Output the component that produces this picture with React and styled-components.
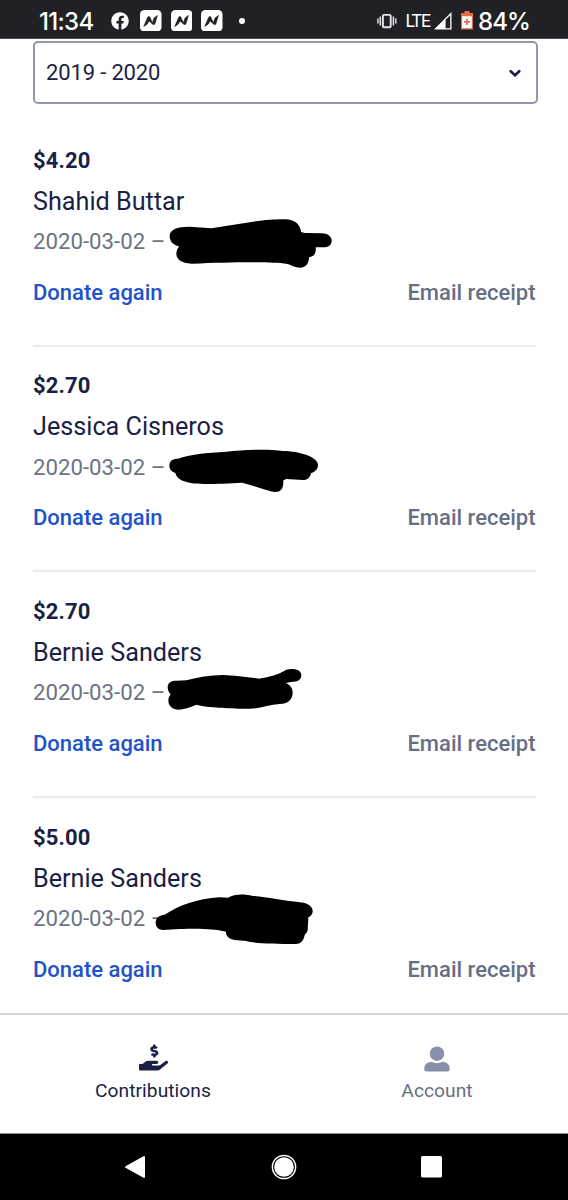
import React from "react";
import styled, { createGlobalStyle } from "styled-components";
import { FaFacebook, FaHandHoldingUsd } from "react-icons/fa";

const GlobalStyle = createGlobalStyle`
  * {
    box-sizing: border-box;
  }
  body {
    margin: 0;
    background: #fff;
    font-family: Roboto, "Liberation Sans", sans-serif;
  }
`;

const Screen = styled.div`
  display: flex;
  flex-direction: column;
  width: 568px;
  height: 1200px;
  overflow: hidden;
  background: #fff;
  color: #1b1f45;
`;

const StatusBar = styled.header`
  display: flex;
  flex: none;
  align-items: center;
  justify-content: space-between;
  height: 39px;
  padding: 3px 38px 0 39px;
  background: #202124;
  border-bottom: 1px solid #4a4b4e;
  color: #fff;
  svg {
    display: block;
    flex: none;
  }
`;

const StatusGroup = styled.div`
  display: flex;
  align-items: center;
`;

const Clock = styled.span`
  width: 72px;
  padding-top: 3px;
  font-family: Inter, sans-serif;
  font-size: 24px;
  font-weight: 500;
  line-height: 32px;
  letter-spacing: -0.7px;
`;

const NewsIcons = styled.div`
  display: flex;
  gap: 9px;
  margin: 0 16px 0 11px;
`;

const Dot = styled.span`
  width: 6px;
  height: 6px;
  border-radius: 50%;
  background: #fff;
`;

const Network = styled.span`
  margin: 0 4px 0 9px;
  font-size: 17.5px;
  font-weight: 400;
  line-height: 34px;
  letter-spacing: -1px;
`;

const BatterySlot = styled.span`
  margin: 0 5px 0 9px;
`;

const Percent = styled.span`
  padding-top: 3px;
  font-family: Inter, sans-serif;
  font-size: 24px;
  font-weight: 500;
  line-height: 32px;
  letter-spacing: -0.9px;
`;

const Content = styled.main`
  display: flex;
  flex: 1;
  flex-direction: column;
  min-height: 0;
  padding: 2px 30px 0 33px;
`;

const Select = styled.div`
  display: flex;
  flex: none;
  align-items: center;
  justify-content: space-between;
  height: 63px;
  padding: 0 15px 0 11px;
  border: 2px solid #9297ab;
  border-radius: 5px;
  font-size: 22px;
  letter-spacing: -0.15px;
`;

const List = styled.div`
  display: flex;
  flex-direction: column;
  padding: 17px 2px 0 0;
`;

const Item = styled.article`
  display: flex;
  flex: none;
  flex-direction: column;
  height: 225.6px;
  padding-top: 25.9px;
  border-bottom: 2px solid ${(props) => (props.$last ? "transparent" : "#eaebed")};
`;

const Amount = styled.div`
  height: 28px;
  font-size: 22px;
  font-weight: 700;
  line-height: 28px;
  letter-spacing: 0.1px;
`;

const Name = styled.div`
  height: 32px;
  margin-top: 11px;
  font-size: 25.2px;
  line-height: 32px;
`;

const Meta = styled.div`
  position: relative;
  height: 28px;
  margin-top: 9.1px;
  color: #6b7385;
  font-size: 22.2px;
  line-height: 28px;
  letter-spacing: 0.02px;
`;

/* marker stroke lying over the rest of the meta line */
const Scribble = styled.svg`
  position: absolute;
  top: -13.7px;
  left: 120px;
  width: 186.7px;
  height: 60px;
`;

const Actions = styled.div`
  display: flex;
  justify-content: space-between;
  margin-top: 23.8px;
  padding-right: 0.5px;
  font-size: 22px;
  font-weight: 500;
  line-height: 28px;
`;

const Action = styled.a`
  color: ${(props) => (props.$primary ? "#2253c9" : "#667085")};
`;

const TabBar = styled.nav`
  display: flex;
  flex: none;
  height: 121px;
  border-top: 2px solid #d2d5da;
  border-bottom: 1px solid #8e8e8e;
`;

const Tab = styled.div`
  display: flex;
  flex: 1;
  flex-direction: column;
  align-items: center;
  padding: ${(props) => (props.$active ? "28px 0 0 22px" : "29.5px 0 0 22px")};
  color: ${(props) => (props.$active ? "#1b1f45" : "#667085")};
  svg {
    display: block;
  }
`;

const TabLabel = styled.span`
  margin-top: ${(props) => (props.$active ? "6px" : "5.5px")};
  font-size: 19.2px;
  line-height: 26px;
  letter-spacing: 0.05px;
`;

const SystemNav = styled.footer`
  display: flex;
  flex: none;
  align-items: center;
  justify-content: space-between;
  height: 66px;
  padding: 0 125px 0 124px;
  background: #000;
`;

const items = [
  {
    amount: "$4.20",
    name: "Shahid Buttar",
    date: "2020-03-02 –",
    top: 220,
    stroke:
      "M450 290C450 270 470 261 510 261L575 266L700 246C740 240 780 238 800 239C830 242 843 258 844 277L855 280L905 281C925 281 936 291 936 303C936 316 926 323 910 323L888 323C890 340 885 350 868 353C868 372 858 384 842 384C825 384 815 375 800 372C760 366 650 366 515 372C485 371 470 358 470 342C470 335 473 328 478 320C460 316 450 305 450 290Z",
  },
  {
    amount: "$2.70",
    name: "Jessica Cisneros",
    date: "2020-03-02 –",
    top: 207,
    stroke:
      "M449 288C449 272 458 266 475 266C510 253 560 248 620 245C670 240 740 236 790 243C840 243 895 262 895 284C895 298 885 306 874 309C872 322 864 330 850 330L800 327L791 331C792 355 785 366 766 366C750 364 710 350 668 338C630 340 590 342 560 342C510 342 472 334 467 309C455 305 449 298 449 288Z",
  },
  {
    amount: "$2.70",
    name: "Bernie Sanders",
    date: "2020-03-02 –",
    top: 223,
    stroke:
      "M444 293C444 278 456 273 470 273L500 272C535 262 570 257 610 256C640 257 690 263 718 267C745 262 775 256 800 240C815 236 845 237 845 257C845 272 832 277 815 277L798 280C812 285 819 297 819 309C818 330 805 342 780 343C750 345 720 357 690 357C640 357 560 354 530 345C510 353 492 360 475 360C455 358 446 345 446 333C446 325 449 319 453 314C446 307 444 300 444 293Z",
  },
  {
    amount: "$5.00",
    name: "Bernie Sanders",
    date: "2020-03-02 –",
    top: 225,
    stroke:
      "M408 323C408 307 420 300 435 299C480 270 530 252 600 247L625 248C645 237 670 236 700 243C740 246 790 257 852 263C867 266 880 277 879 290C878 300 872 303 866 307L864 345C863 352 858 357 855 360C852 378 842 387 828 387C760 387 700 385 680 378L645 375C628 372 618 364 619 350C580 342 550 340 480 342L430 345C416 344 408 335 408 323Z",
  },
];

const NewsIcon = () => (
  <svg width="21.5" height="21.5" viewBox="0 0 64 64">
    <rect width="64" height="64" rx="13" fill="#fff" />
    <path
      d="M11 49L22 23Q24 18 29 20L37 38L41 25Q42 22 52 16L45 40Q43 46 37 42L27 33L23 40Q21 44 11 49Z"
      fill="#202124"
      stroke="#202124"
      strokeWidth="1.5"
      strokeLinejoin="round"
    />
  </svg>
);

const VibrateIcon = () => (
  <svg width="20" height="16" viewBox="0 0 20 16" fill="none" stroke="#e6e6e6">
    <rect x="5.9" y="1.9" width="7.8" height="12.4" rx="1" strokeWidth="1.9" />
    <path d="M3.3 3.5V12.5M16.4 3.5V12.5" strokeWidth="1.5" />
    <path d="M.9 5.5V10.5M18.8 5.5V10.5" strokeWidth="1.4" />
  </svg>
);

const SignalIcon = () => (
  <svg width="18" height="18" viewBox="0 0 18 18">
    <path d="M0 17.5L17.5 0V17.5Z" fill="#fff" />
    <path d="M11.6 7.8L16.2 3.2V16.2H11.6Z" fill="#202124" />
  </svg>
);

const BatteryIcon = () => (
  <svg width="12" height="19" viewBox="0 0 12 19">
    <path d="M3.5 0H8.5V2H12V18.5H0V2H3.5Z" fill="#e2704d" />
    <rect x="1.2" y="5.2" width="9.6" height="12" fill="#fff" />
    <path d="M6 7.8V14M3 10.9H9" stroke="#e2704d" strokeWidth="1.8" />
  </svg>
);

const ChevronIcon = () => (
  <svg width="12" height="8" viewBox="0 0 12 8">
    <path
      d="M1.7 2.2L6 6.3L10.3 2.2"
      fill="none"
      stroke="#1b1f45"
      strokeWidth="2.6"
      strokeLinecap="round"
    />
  </svg>
);

const AccountIcon = () => (
  <svg width="26" height="28" viewBox="0 0 26 28" fill="#8790a8">
    <circle cx="13" cy="8.7" r="7.2" />
    <path d="M0.3 24C0.3 19.1 3 17 7.8 17C11 18.5 15 18.5 18.2 17C23 17 25.7 19.1 25.7 24Q25.7 26.5 23.2 26.5H2.8Q.3 26.5 .3 24Z" />
  </svg>
);

const Contribution = ({ item, last }) => (
  <Item $last={last}>
    <Amount>{item.amount}</Amount>
    <Name>{item.name}</Name>
    <Meta>
      {item.date}
      <Scribble viewBox={`400 ${item.top} 560 180`}>
        <path d={item.stroke} />
      </Scribble>
    </Meta>
    <Actions>
      <Action $primary>Donate again</Action>
      <Action>Email receipt</Action>
    </Actions>
  </Item>
);

const App = () => {
  return (
    <Screen>
      <GlobalStyle />
      <StatusBar>
        <StatusGroup>
          <Clock>11:34</Clock>
          <FaFacebook size={18} />
          <NewsIcons>
            <NewsIcon />
            <NewsIcon />
            <NewsIcon />
          </NewsIcons>
          <Dot />
        </StatusGroup>
        <StatusGroup>
          <VibrateIcon />
          <Network>LTE</Network>
          <SignalIcon />
          <BatterySlot>
            <BatteryIcon />
          </BatterySlot>
          <Percent>84%</Percent>
        </StatusGroup>
      </StatusBar>
      <Content>
        <Select>
          <span>2019 - 2020</span>
          <ChevronIcon />
        </Select>
        <List>
          {items.map((item, i) => (
            <Contribution key={i} item={item} last={i === items.length - 1} />
          ))}
        </List>
      </Content>
      <TabBar>
        <Tab $active>
          <FaHandHoldingUsd size={29} />
          <TabLabel $active>Contributions</TabLabel>
        </Tab>
        <Tab>
          <AccountIcon />
          <TabLabel>Account</TabLabel>
        </Tab>
      </TabBar>
      <SystemNav>
        <svg width="22" height="24" viewBox="0 0 22 24">
          <path d="M2 12L20 2V22Z" fill="#fff" stroke="#fff" strokeWidth="2" strokeLinejoin="round" />
        </svg>
        <svg width="26" height="26" viewBox="0 0 26 26">
          <circle cx="13" cy="13" r="11.6" fill="none" stroke="#fff" strokeWidth="1.5" />
          <circle cx="13" cy="13" r="9.8" fill="#fff" />
        </svg>
        <svg width="22" height="22" viewBox="0 0 22 22">
          <rect width="21" height="21.5" rx="1.5" fill="#fff" />
        </svg>
      </SystemNav>
    </Screen>
  );
};

export default App;
